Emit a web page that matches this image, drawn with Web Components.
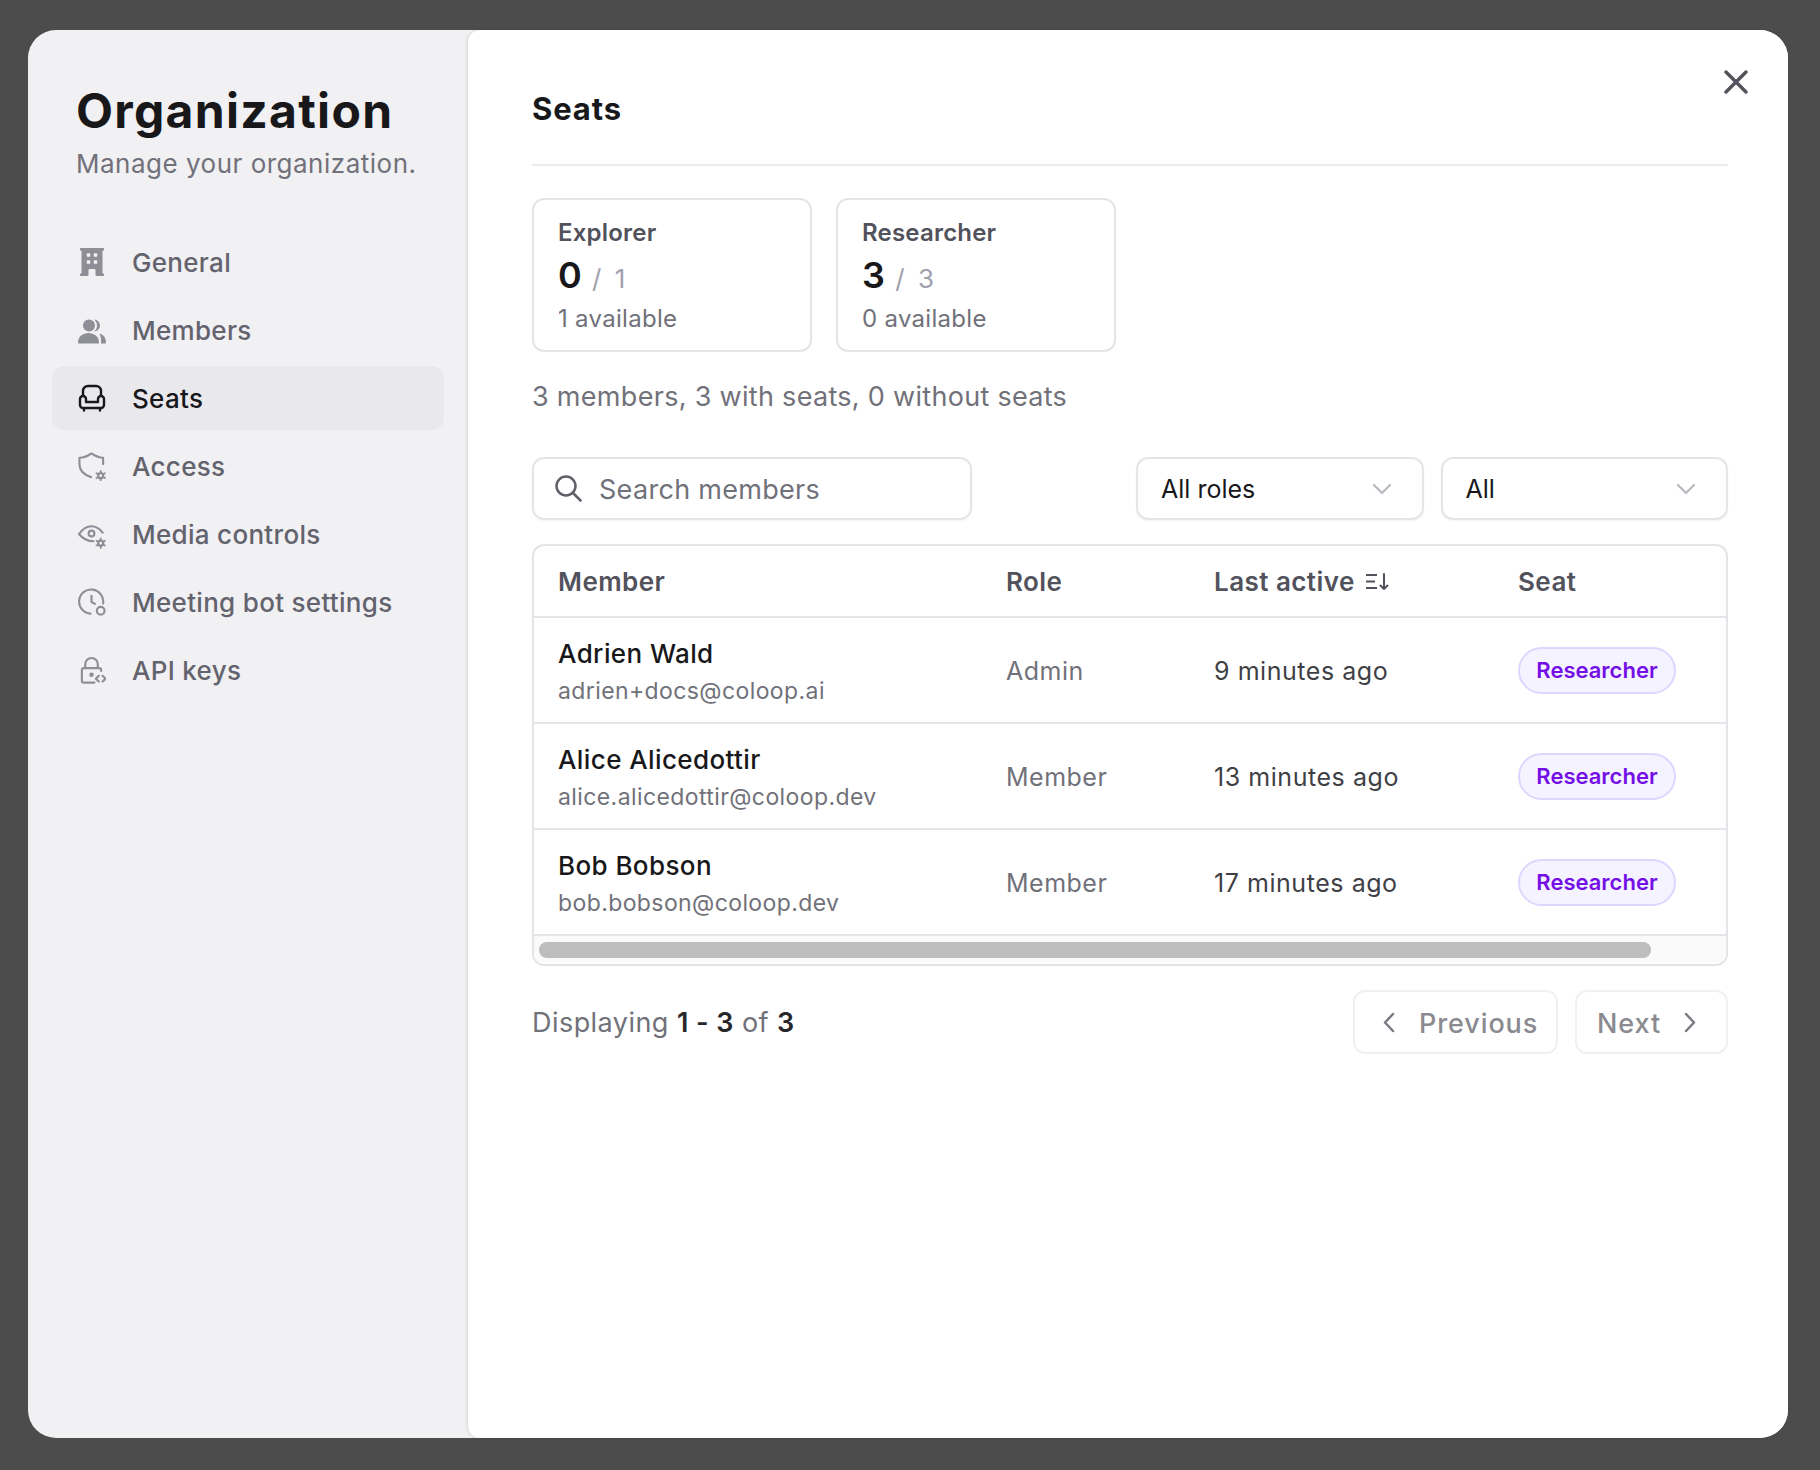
<!DOCTYPE html>
<html>
<head>
<meta charset="utf-8">
<title>Seats</title>
<style>
	html, body { margin: 0; height: 100%; background: #4c4c4c; }
	body { font-family: Inter, "Noto Sans", sans-serif; color: #18181b; }
	b { font-weight: 600; color: #27272a; }
</style>
</head>
<body>

<org-modal>
	<org-sidebar slot="side" heading="Organization" sub="Manage your organization.">
		<nav-item icon="building">General</nav-item>
		<nav-item icon="users">Members</nav-item>
		<nav-item icon="chair" active>Seats</nav-item>
		<nav-item icon="shield">Access</nav-item>
		<nav-item icon="eye">Media controls</nav-item>
		<nav-item icon="clock">Meeting bot settings</nav-item>
		<nav-item icon="lock">API keys</nav-item>
	</org-sidebar>

	<seats-panel heading="Seats">
		<seat-card name="Explorer" used="0" total="1" free="1 available"></seat-card>
		<seat-card name="Researcher" used="3" total="3" free="0 available"></seat-card>

		<span slot="summary">3 members, 3 with seats, 0 without seats</span>

		<search-box slot="filters" placeholder="Search members"></search-box>
		<filter-select slot="filters" value="All roles"></filter-select>
		<filter-select slot="filters" value="All"></filter-select>

		<member-table slot="table">
			<member-row name="Adrien Wald" email="adrien+docs@coloop.ai" role="Admin" active="9 minutes ago" seat="Researcher"></member-row>
			<member-row name="Alice Alicedottir" email="alice.alicedottir@coloop.dev" role="Member" active="13 minutes ago" seat="Researcher"></member-row>
			<member-row name="Bob Bobson" email="bob.bobson@coloop.dev" role="Member" active="17 minutes ago" seat="Researcher"></member-row>
		</member-table>

		<span slot="count">Displaying <b>1 - 3</b> of <b>3</b></span>
		<pager-button slot="pager" dir="prev">Previous</pager-button>
		<pager-button slot="pager" dir="next">Next</pager-button>
	</seats-panel>
</org-modal>

<script>
const gear = (x, y) => `<g stroke-width="1.8"><circle cx="${x}" cy="${y}" r="2.6" stroke-width="2.300"/><path d="M${x} ${y - 5}v2M${x} ${y + 3}v2M${x - 4.4} ${y - 2.5}l1.700 1M${x + 2.700} ${y + 1.500}l1.700 1M${x - 4.4} ${y + 2.5}l1.700-1M${x + 2.700} ${y - 1.500}l1.700-1"/></g>`;

const ICONS = {
	building: `<svg width="28" height="28" viewBox="2.5 2 15 16" fill="currentColor"><path fill-rule="evenodd" d="M4 16.5v-13h-.25a.75.75 0 0 1 0-1.5h12.5a.75.75 0 0 1 0 1.5H16v13h.25a.75.75 0 0 1 0 1.5h-3.5a.75.75 0 0 1-.75-.75v-2.5a.75.75 0 0 0-.75-.75h-2.5a.75.75 0 0 0-.75.75v2.5a.75.75 0 0 1-.75.75h-3.5a.75.75 0 0 1 0-1.5H4Zm3-11a.5.5 0 0 1 .5-.5h1a.5.5 0 0 1 .5.5v1a.5.5 0 0 1-.5.5h-1a.5.5 0 0 1-.5-.5v-1ZM7.5 9a.5.5 0 0 0-.5.5v1a.5.5 0 0 0 .5.5h1a.5.5 0 0 0 .5-.5v-1a.5.5 0 0 0-.5-.5h-1ZM11 5.5a.5.5 0 0 1 .5-.5h1a.5.5 0 0 1 .5.5v1a.5.5 0 0 1-.5.5h-1a.5.5 0 0 1-.5-.5v-1Zm.5 3.5a.5.5 0 0 0-.5.5v1a.5.5 0 0 0 .5.5h1a.5.5 0 0 0 .5-.5v-1a.5.5 0 0 0-.5-.5h-1Z"/></svg>`,
	users: `<svg width="28" height="28" viewBox="0 0 28 28" fill="currentColor"><circle cx="11" cy="9.500" r="6"/><path d="M0 26.500c0-6 5-9.500 10.500-9.500s10.500 3.500 10.500 9.500c0 .5-.5 1-1 1H1c-.5 0-1-.5-1-1Z"/><path d="M16 3.500a6 6 0 0 1 0 12c2-1.500 3-3.500 3-6s-1-4.500-3-6ZM21.500 17.500c4 1 6.500 4.500 6.500 9 0 .5-.5 1-1 1h-4c.500-4-.5-7.500-1.500-10Z"/></svg>`,
	chair: `<svg width="28" height="28" viewBox="0 0 28 28" fill="none" stroke="currentColor" stroke-width="2.400" stroke-linecap="round" stroke-linejoin="round"><path d="M5 11.500V7a5 5 0 0 1 5-5h8a5 5 0 0 1 5 5v4.500"/><path d="M2 15a3 3 0 0 1 6 0v3h12v-3a3 3 0 0 1 6 0v6a3 3 0 0 1-3 3H5a3 3 0 0 1-3-3ZM6 24v2.500M22 24v2.500"/></svg>`,
	shield: `<svg width="29" height="29" viewBox="0 0 29 29" fill="none" stroke="currentColor" stroke-width="2.200" stroke-linecap="round" stroke-linejoin="round"><path d="M26 12V5.500C21 5.500 17.500 3.500 14 1 10.500 3.500 6 5.500 1.500 5.500V12c0 6.500 4 11 12 13.500"/>${gear(23.5, 24)}</svg>`,
	eye: `<svg width="29" height="29" viewBox="0 0 29 29" fill="none" stroke="currentColor" stroke-width="2.200" stroke-linecap="round" stroke-linejoin="round"><path d="M25.500 12.500C22 8 18 6 14 6S5 8.500 1 14c4 5 8.500 7.500 15 7.500"/><circle cx="14" cy="13.500" r="3"/>${gear(23.5, 23.5)}</svg>`,
	clock: `<svg width="29" height="29" viewBox="0 0 29 29" fill="none" stroke="currentColor" stroke-width="2.200" stroke-linecap="round" stroke-linejoin="round"><path d="M26 15.500A12.500 12.500 0 1 0 13 26"/><path d="M14 7.500V14l3.500 2"/><circle cx="23.500" cy="23" r="4"/></svg>`,
	lock: `<svg width="29" height="29" viewBox="0 0 29 29" fill="none" stroke="currentColor" stroke-width="2.200" stroke-linecap="round" stroke-linejoin="round"><path d="M7.500 12V8a6.500 6.500 0 0 1 13 0v4"/><path d="M24 15v-1a2 2 0 0 0-2-2H6a2 2 0 0 0-2 2v11a2 2 0 0 0 2 2h11"/><circle cx="14" cy="19" r="1.200" fill="currentColor"/><path d="M21.500 20l-3 3 3 3M25.500 20l3 3-3 3"/></svg>`,
	search: `<svg width="28" height="28" viewBox="0 0 28 28" fill="none" stroke="currentColor" stroke-width="2.500" stroke-linecap="round"><circle cx="12" cy="12" r="9.500"/><path d="m19 19 7.500 7.500"/></svg>`,
	down: `<svg width="20" height="12" viewBox="0 0 20 12" fill="none" stroke="currentColor" stroke-width="2.200" stroke-linecap="round" stroke-linejoin="round"><path d="m2 2 8 8 8-8"/></svg>`,
	sort: `<svg width="24" height="18" viewBox="0 0 24 18" fill="none" stroke="currentColor" stroke-width="2"><path d="M1 2h11M1 8.500h9M1 15h11"/><path stroke-linecap="round" stroke-linejoin="round" d="M19 1v15M15.500 12.500 19 16l3.500-3.500"/></svg>`,
	prev: `<svg width="13" height="21" viewBox="0 0 13 21" fill="none" stroke="currentColor" stroke-width="2.500" stroke-linecap="round" stroke-linejoin="round"><path d="M11 2 3 10.500 11 19"/></svg>`,
	next: `<svg width="13" height="21" viewBox="0 0 13 21" fill="none" stroke="currentColor" stroke-width="2.500" stroke-linecap="round" stroke-linejoin="round"><path d="m2 2 8 8.500L2 19"/></svg>`,
	close: `<svg width="24" height="24" viewBox="0 0 24 24" fill="none" stroke="currentColor" stroke-width="3.400" stroke-linecap="round"><path d="m2 2 20 20M22 2 2 22"/></svg>`
};

class Base extends HTMLElement {
	constructor() {
		super();
		this.attachShadow({ mode: 'open' });
	}
	attr(name) {
		return this.getAttribute(name) || '';
	}
}

class OrgModal extends Base {
	connectedCallback() {
		this.shadowRoot.innerHTML = `
			<style>
				:host {
					display: flex;
					position: relative;
					box-sizing: border-box;
					width: 1760px;
					height: 1408px;
					margin: 30px 0 0 28px;
					background: #f1f0f3;
					border-radius: 28px;
				}
				button {
					position: absolute;
					top: 40px;
					right: 40px;
					padding: 0;
					border: 0;
					background: none;
					color: #52525c;
					display: flex;
				}
			</style>
			<slot name="side"></slot>
			<slot></slot>
			<button aria-label="Close">${ICONS.close}</button>
		`;
	}
}

class OrgSidebar extends Base {
	connectedCallback() {
		this.shadowRoot.innerHTML = `
			<style>
				:host {
					display: block;
					box-sizing: border-box;
					width: 440px;
					flex: none;
					padding: 53px 24px 0;
				}
				h1 {
					margin: 0 0 0 24px;
					font-size: 48px;
					line-height: 56px;
					font-weight: 700;
					letter-spacing: 1.3px;
					color: #18181b;
				}
				p {
					margin: 8px 0 49px 24px;
					font-size: 26px;
					line-height: 34px;
					letter-spacing: .5px;
					color: #71717a;
				}
				nav { display: flex; flex-direction: column; gap: 4px; }
			</style>
			<h1>${this.attr('heading')}</h1>
			<p>${this.attr('sub')}</p>
			<nav><slot></slot></nav>
		`;
	}
}

class NavItem extends Base {
	connectedCallback() {
		this.shadowRoot.innerHTML = `
			<style>
				:host {
					display: flex;
					align-items: center;
					gap: 26px;
					height: 64px;
					padding-left: 26px;
					border-radius: 12px;
					font-size: 26px;
					font-weight: 500;
					letter-spacing: .3px;
					color: #63636e;
				}
				:host([active]) { background: #e9e8ec; color: #18181b; }
				.icon { display: flex; width: 28px; color: #8e8e96; }
				:host([active]) .icon { color: #18181b; }
			</style>
			<span class="icon">${ICONS[this.attr('icon')]}</span>
			<span><slot></slot></span>
		`;
	}
}

class SeatsPanel extends Base {
	connectedCallback() {
		this.shadowRoot.innerHTML = `
			<style>
				:host {
					display: block;
					box-sizing: border-box;
					flex: 1;
					background: #fff;
					border-radius: 12px 28px 28px 12px;
					box-shadow: -1px 0 3px rgba(0, 0, 0, .12);
					padding: 0 60px 0 64px;
				}
				h2 {
					margin: 0;
					height: 136px;
					padding-top: 57px;
					box-sizing: border-box;
					border-bottom: 2px solid #ececef;
					font-size: 31px;
					line-height: 44px;
					font-weight: 700;
					letter-spacing: .9px;
					color: #18181b;
				}
				.cards { display: flex; gap: 24px; margin-top: 32px; }
				.summary {
					margin: 25px 0 0;
					font-size: 27px;
					line-height: 40px;
					letter-spacing: .3px;
					color: #71717a;
				}
				.filters { display: flex; gap: 17px; margin-top: 40px; }
				.table { display: block; margin-top: 24px; }
				.foot { display: flex; align-items: center; margin-top: 24px; }
				.count { flex: 1; font-size: 27px; letter-spacing: .45px; color: #71717a; }
				.pager { display: flex; gap: 17px; }
			</style>
			<h2>${this.attr('heading')}</h2>
			<div class="cards"><slot></slot></div>
			<div class="summary"><slot name="summary"></slot></div>
			<div class="filters"><slot name="filters"></slot></div>
			<div class="table"><slot name="table"></slot></div>
			<div class="foot">
				<div class="count"><slot name="count"></slot></div>
				<div class="pager"><slot name="pager"></slot></div>
			</div>
		`;
	}
}

class SeatCard extends Base {
	connectedCallback() {
		this.shadowRoot.innerHTML = `
			<style>
				:host {
					display: block;
					box-sizing: border-box;
					width: 280px;
					height: 154px;
					padding: 17px 24px;
					border: 2px solid #e4e4e9;
					border-radius: 12px;
				}
				.name { font-size: 24px; line-height: 32px; font-weight: 600; letter-spacing: .2px; color: #52525c; }
				.count { line-height: 44px; margin-top: 4px; }
				.used { font-size: 36px; font-weight: 600; color: #18181b; }
				.total { font-size: 26px; margin-left: -3px; word-spacing: 6px; color: #a1a1ad; }
				.free { font-size: 24px; line-height: 32px; margin-top: -1px; letter-spacing: .3px; color: #71717a; }
			</style>
			<div class="name">${this.attr('name')}</div>
			<div class="count"><span class="used">${this.attr('used')}</span><span class="total"> / ${this.attr('total')}</span></div>
			<div class="free">${this.attr('free')}</div>
		`;
	}
}

class SearchBox extends Base {
	connectedCallback() {
		this.shadowRoot.innerHTML = `
			<style>
				:host {
					display: flex;
					align-items: center;
					gap: 17px;
					box-sizing: border-box;
					width: 440px;
					height: 63px;
					margin-right: auto;
					padding-left: 20px;
					border: 2px solid #e4e4e9;
					border-radius: 12px;
					box-shadow: 0 1px 2px rgba(0, 0, 0, .05);
					font-size: 27px;
					letter-spacing: .3px;
					color: #71717a;
				}
				.icon { display: flex; margin-top: -1px; color: #5f5f68; }
				.text { padding-top: 2px; }
			</style>
			<span class="icon">${ICONS.search}</span>
			<span class="text">${this.attr('placeholder')}</span>
		`;
	}
}

class FilterSelect extends Base {
	connectedCallback() {
		this.shadowRoot.innerHTML = `
			<style>
				:host {
					display: flex;
					align-items: center;
					justify-content: space-between;
					box-sizing: border-box;
					width: 287.5px;
					height: 63px;
					padding: 0 30px 0 23px;
					border: 2px solid #e4e4e9;
					border-radius: 12px;
					box-shadow: 0 1px 2px rgba(0, 0, 0, .05);
					font-size: 25px;
					color: #18181b;
				}
				.icon { display: flex; color: #b8b8be; }
			</style>
			<span>${this.attr('value')}</span>
			<span class="icon">${ICONS.down}</span>
		`;
	}
}

class MemberTable extends Base {
	connectedCallback() {
		this.shadowRoot.innerHTML = `
			<style>
				:host {
					display: block;
					box-sizing: border-box;
					height: 422px;
					border: 2px solid #e4e4e9;
					border-radius: 12px;
					overflow: hidden;
				}
				.head, ::slotted(member-row) {
					display: grid;
					grid-template-columns: 448px 208px 304px 1fr;
					padding-left: 24px;
				}
				.head {
					height: 72px;
					align-items: center;
					border-bottom: 2px solid #e4e4e9;
					font-size: 26px;
					line-height: 34px;
					padding-top: 1px;
					box-sizing: border-box;
					font-weight: 600;
					letter-spacing: .45px;
					color: #52525c;
				}
				.sort { display: flex; align-items: center; gap: 10px; }
				.sort span { display: flex; }
				.bar {
					height: 26px;
					padding: 6px 5px 0;
					box-sizing: border-box;
					background: #fafafa;
				}
				.thumb { width: 1112px; height: 16px; border-radius: 8px; background: #bdbdbd; }
			</style>
			<div class="head">
				<div>Member</div>
				<div>Role</div>
				<div class="sort">Last active <span>${ICONS.sort}</span></div>
				<div>Seat</div>
			</div>
			<slot></slot>
			<div class="bar"><div class="thumb"></div></div>
		`;
	}
}

class MemberRow extends Base {
	connectedCallback() {
		this.shadowRoot.innerHTML = `
			<style>
				:host {
					box-sizing: border-box;
					height: 106px;
					align-items: center;
					border-bottom: 2px solid #e4e4e9;
				}
				.who { padding-top: 6px; }
				.name { font-size: 26px; line-height: 36px; font-weight: 500; letter-spacing: .4px; color: #18181b; }
				.email { font-size: 23px; line-height: 38px; letter-spacing: .4px; color: #71717a; }
				.role { padding-top: 2px; font-size: 25px; letter-spacing: .5px; color: #71717a; }
				.active { padding-top: 2px; font-size: 25px; letter-spacing: .55px; color: #3f3f46; }
			</style>
			<div class="who">
				<div class="name">${this.attr('name')}</div>
				<div class="email">${this.attr('email')}</div>
			</div>
			<div class="role">${this.attr('role')}</div>
			<div class="active">${this.attr('active')}</div>
			<div><seat-badge>${this.attr('seat')}</seat-badge></div>
		`;
	}
}

class SeatBadge extends Base {
	connectedCallback() {
		this.shadowRoot.innerHTML = `
			<style>
				:host {
					display: inline-flex;
					align-items: center;
					justify-content: center;
					box-sizing: border-box;
					width: 158px;
					height: 47px;
					border: 2px solid #ddd6fe;
					border-radius: 24px;
					background: #f5f3ff;
					font-size: 22px;
					font-weight: 600;
					color: #7410e6;
				}
			</style>
			<slot></slot>
		`;
	}
}

class PagerButton extends Base {
	connectedCallback() {
		const dir = this.attr('dir');
		const icon = `<span class="icon">${ICONS[dir]}</span>`;
		this.shadowRoot.innerHTML = `
			<style>
				:host {
					display: flex;
					align-items: center;
					gap: 24px;
					box-sizing: border-box;
					width: 205px;
					height: 64px;
					padding-left: 27px;
					border: 2px solid #f0f0f2;
					border-radius: 12px;
					font-size: 27px;
					font-weight: 500;
					letter-spacing: .9px;
					color: #8a8a90;
				}
				:host([dir="next"]) { width: 153px; gap: 23px; padding-left: 20px; }
				.icon { display: flex; color: #7a7a82; }
				.text { padding-top: 2px; }
			</style>
			${dir === 'prev' ? icon : ''}<span class="text"><slot></slot></span>${dir === 'next' ? icon : ''}
		`;
	}
}

customElements.define('org-modal', OrgModal);
customElements.define('org-sidebar', OrgSidebar);
customElements.define('nav-item', NavItem);
customElements.define('seats-panel', SeatsPanel);
customElements.define('seat-card', SeatCard);
customElements.define('search-box', SearchBox);
customElements.define('filter-select', FilterSelect);
customElements.define('member-table', MemberTable);
customElements.define('member-row', MemberRow);
customElements.define('seat-badge', SeatBadge);
customElements.define('pager-button', PagerButton);
</script>
</body>
</html>
